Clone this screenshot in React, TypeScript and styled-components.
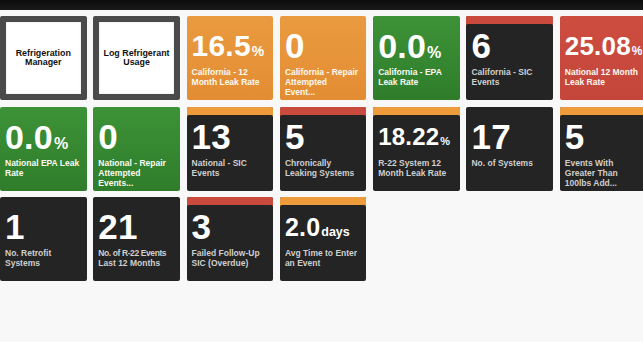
import React from "react";
import styled, { createGlobalStyle, css } from "styled-components";

const GlobalStyle = createGlobalStyle`
  html, body {
    margin: 0;
    padding: 0;
    background: #f8f8f9;
    overflow: hidden;
  }
  body {
    font-family: "Liberation Sans", Arial, sans-serif;
  }
`;

type Variant = "orange" | "green" | "red" | "dark";
type Stripe = "red" | "orange" | undefined;

const Page = styled.div`
  width: 643px;
  height: 342px;
  overflow: hidden;
  background: #f8f8f9;
  display: flex;
  flex-direction: column;
`;

const TopBar = styled.div`
  height: 10px;
  flex: none;
  background: linear-gradient(#0c0c0c, #1a1a1a);
`;

const Grid = styled.div`
  display: grid;
  grid-template-columns: repeat(7, 86.5px);
  grid-auto-rows: 84px;
  column-gap: 6.8px;
  row-gap: 6.5px;
  padding-top: 6px;
  width: max-content;
`;

const LinkTile = styled.div`
  box-sizing: border-box;
  border: 6px solid #4a4a4a;
  border-radius: 2px;
  background: #ffffff;
  box-shadow: inset 0 0 2px rgba(0, 0, 0, 0.15);
  display: flex;
  flex-direction: column;
  align-items: center;
  justify-content: center;
  text-align: center;
  color: #111;
  font-weight: bold;
  font-size: 8.9px;
  line-height: 9px;
  white-space: nowrap;
`;

const backgrounds: Record<Variant, string> = {
  orange: "linear-gradient(#ea9a40, #e38d33)",
  green: "linear-gradient(#3d9237, #2f7d2b)",
  red: "linear-gradient(#cd4d40, #c4463a)",
  dark: "#242424",
};

const stripes: Record<string, string> = {
  red: "#cb4a3e",
  orange: "#ee9c3b",
};

const Tile = styled.div<{ $variant: Variant; $stripe?: Stripe }>`
  box-sizing: border-box;
  border-radius: 2px;
  background: ${(p) => backgrounds[p.$variant]};
  padding: 12px 5px 0 5px;
  display: flex;
  flex-direction: column;
  overflow: hidden;
  ${(p) =>
    p.$stripe &&
    css`
      box-shadow: inset 0 8px 0 ${stripes[p.$stripe]};
    `}
`;

const Value = styled.div<{ $size: number }>`
  color: #ffffff;
  font-weight: bold;
  font-size: ${(p) => p.$size}px;
  line-height: 36px;
  height: 36px;
  white-space: nowrap;
  letter-spacing: 0.2px;
`;

const Unit = styled.span<{ $size: number }>`
  font-size: ${(p) => p.$size}px;
  letter-spacing: 0;
  margin-left: 1px;
`;

const Label = styled.div<{ $dark: boolean }>`
  margin-top: 3px;
  color: ${(p) => (p.$dark ? "#cfcfcf" : "#fdf9f2")};
  font-weight: bold;
  font-size: 8.5px;
  line-height: 10px;
  white-space: nowrap;
`;

const Line = styled.span<{ $tight?: boolean }>`
  display: block;
  letter-spacing: ${(p) => (p.$tight ? "-0.4px" : "0")};
`;

type Stat = {
  kind: "stat";
  variant: Variant;
  stripe?: Stripe;
  value: string;
  size: number;
  unit?: string;
  unitSize?: number;
  label: string[];
  tight?: boolean;
};

type Link = { kind: "link"; label: string[] };

const items: (Stat | Link)[] = [
  { kind: "link", label: ["Refrigeration", "Manager"] },
  { kind: "link", label: ["Log Refrigerant", "Usage"] },
  { kind: "stat", variant: "orange", value: "16.5", size: 30, unit: "%", unitSize: 14, label: ["California - 12", "Month Leak Rate"] },
  { kind: "stat", variant: "orange", value: "0", size: 35, label: ["California - Repair", "Attempted", "Event..."] },
  { kind: "stat", variant: "green", value: "0.0", size: 34, unit: "%", unitSize: 16, label: ["California - EPA", "Leak Rate"] },
  { kind: "stat", variant: "dark", stripe: "red", value: "6", size: 35, label: ["California - SIC", "Events"] },
  { kind: "stat", variant: "red", value: "25.08", size: 26, unit: "%", unitSize: 12, label: ["National 12 Month", "Leak Rate"] },

  { kind: "stat", variant: "green", value: "0.0", size: 34, unit: "%", unitSize: 16, label: ["National EPA Leak", "Rate"] },
  { kind: "stat", variant: "green", value: "0", size: 35, label: ["National - Repair", "Attempted", "Events..."] },
  { kind: "stat", variant: "dark", stripe: "orange", value: "13", size: 35, label: ["National - SIC", "Events"] },
  { kind: "stat", variant: "dark", stripe: "red", value: "5", size: 35, label: ["Chronically", "Leaking Systems"] },
  { kind: "stat", variant: "dark", stripe: "orange", value: "18.22", size: 24, unit: "%", unitSize: 11, label: ["R-22 System 12", "Month Leak Rate"] },
  { kind: "stat", variant: "dark", value: "17", size: 35, label: ["No. of Systems"] },
  { kind: "stat", variant: "dark", stripe: "orange", value: "5", size: 35, label: ["Events With", "Greater Than", "100lbs Add..."] },

  { kind: "stat", variant: "dark", value: "1", size: 35, label: ["No. Retrofit", "Systems"] },
  { kind: "stat", variant: "dark", value: "21", size: 35, label: ["No. of R-22 Events", "Last 12 Months"], tight: true },
  { kind: "stat", variant: "dark", stripe: "red", value: "3", size: 35, label: ["Failed Follow-Up", "SIC (Overdue)"] },
  { kind: "stat", variant: "dark", stripe: "orange", value: "2.0", size: 25, unit: "days", unitSize: 12.5, label: ["Avg Time to Enter", "an Event"] },
];

export default function App() {
  return (
    <>
      <GlobalStyle />
      <Page>
        <TopBar />
        <Grid>
          {items.map((it, i) =>
            it.kind === "link" ? (
              <LinkTile key={i}>
                {it.label.map((l, j) => (
                  <Line key={j}>{l}</Line>
                ))}
              </LinkTile>
            ) : (
              <Tile key={i} $variant={it.variant} $stripe={it.stripe}>
                <Value $size={it.size}>
                  {it.value}
                  {it.unit && <Unit $size={it.unitSize ?? 14}>{it.unit}</Unit>}
                </Value>
                <Label $dark={it.variant === "dark"}>
                  {it.label.map((l, j) => (
                    <Line key={j} $tight={it.tight && j === 0}>
                      {l}
                    </Line>
                  ))}
                </Label>
              </Tile>
            )
          )}
        </Grid>
      </Page>
    </>
  );
}
